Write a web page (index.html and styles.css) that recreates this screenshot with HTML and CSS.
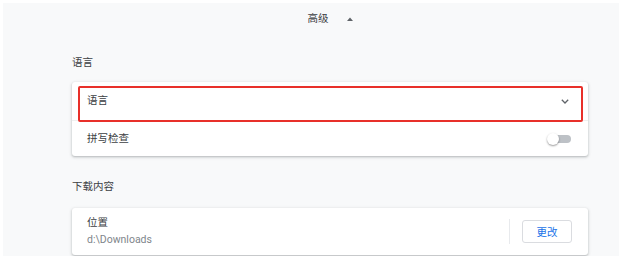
FILE: index.html
```html
<!DOCTYPE html>
<html lang="zh-CN">
<head>
<meta charset="utf-8">
<title>高级设置</title>
<link rel="stylesheet" href="styles.css">
</head>
<body>
<div class="page">
  <div class="column">
    <div class="advanced-header">
      <span class="advanced-label">高级</span>
      <svg class="arrow-up" width="6" height="4" viewBox="0 0 6 4"><polygon points="0,4 3,0.5 6,4" fill="#5f6368"/></svg>
    </div>

    <div class="section-title first">语言</div>
    <div class="card">
      <div class="row row-lang">
        <span class="label">语言</span>
        <svg class="chevron" width="8" height="5" viewBox="0 0 8 5"><polyline points="0.8,0.8 4,4 7.2,0.8" fill="none" stroke="#5f6368" stroke-width="1.3"/></svg>
      </div>
      <div class="row row-spell">
        <span class="label">拼写检查</span>
        <span class="toggle"><span class="toggle-bar"></span><span class="toggle-knob"></span></span>
      </div>
      <div class="highlight"></div>
    </div>

    <div class="section-title second">下载内容</div>
    <div class="card">
      <div class="row row-download">
        <div class="text-block">
          <div class="label">位置</div>
          <div class="sublabel">d:\Downloads</div>
        </div>
        <div class="separator"></div>
        <button class="change-btn">更改</button>
      </div>
    </div>
  </div>
</div>
</body>
</html>
```

FILE: styles.css
```css
html, body {
  margin: 0;
  padding: 0;
  background: #ffffff;
}

body {
  font-family: Roboto, "Noto Sans CJK SC", "Noto Sans", sans-serif;
  font-size: 10.5px;
  color: #3c4043;
  overflow: hidden;
}

.page {
  margin: 3px 0 0 3px;
  background: #f8f9fa;
  height: 253px;
  overflow: hidden;
}

.column {
  margin-left: 69px;
  width: 516px;
}

.advanced-header {
  height: 32px;
  display: flex;
  align-items: center;
  justify-content: center;
  gap: 18px;
}

.advanced-label {
  line-height: 16px;
  color: #3c4043;
}

.arrow-up {
  display: block;
}

.section-title {
  line-height: 16px;
  font-weight: 400;
  color: #3c4043;
}

.section-title.first {
  margin-top: 20px;
  margin-bottom: 11px;
}

.section-title.second {
  margin-top: 23px;
  margin-bottom: 13px;
}

.card {
  position: relative;
  background: #ffffff;
  border-radius: 3px;
  box-shadow: 0 1px 2px rgba(60, 64, 67, 0.25), 0 1px 3px 1px rgba(60, 64, 67, 0.1);
}

.row {
  display: flex;
  align-items: center;
  justify-content: space-between;
  padding: 0 17px 0 15px;
}

.row-lang {
  height: 38px;
  padding-right: 19px;
}

.row-spell {
  height: 35px;
  border-top: 1px solid rgba(0, 0, 0, 0.06);
}

.label {
  line-height: 16px;
}

.chevron {
  display: block;
}

.toggle {
  position: relative;
  width: 24px;
  height: 12px;
  display: block;
}

.toggle-bar {
  position: absolute;
  left: 4px;
  top: 2px;
  width: 20px;
  height: 8px;
  border-radius: 4px;
  background: #bdc1c6;
}

.toggle-knob {
  position: absolute;
  left: 0;
  top: 0;
  width: 12px;
  height: 12px;
  border-radius: 50%;
  background: #ffffff;
  box-shadow: 0 1px 2px rgba(0, 0, 0, 0.4);
}

.highlight {
  position: absolute;
  top: 4px;
  left: 6px;
  right: 5px;
  height: 36px;
  box-sizing: border-box;
  border: 2px solid #e8302a;
  border-radius: 2px;
  pointer-events: none;
}

.row-download {
  padding: 7px 16px 7px 15px;
}

.text-block {
  flex: 1;
}

.sublabel {
  line-height: 16px;
  color: #80868b;
  margin-top: 1px;
}

.separator {
  width: 1px;
  height: 25px;
  background: #e8eaed;
  margin-right: 12px;
}

.change-btn {
  width: 50px;
  height: 23px;
  box-sizing: border-box;
  border: 1px solid #dadce0;
  border-radius: 3px;
  background: #ffffff;
  color: #1a73e8;
  font-family: Roboto, "Noto Sans CJK SC", sans-serif;
  font-size: 10.5px;
  font-weight: 400;
  padding: 0;
}
```
